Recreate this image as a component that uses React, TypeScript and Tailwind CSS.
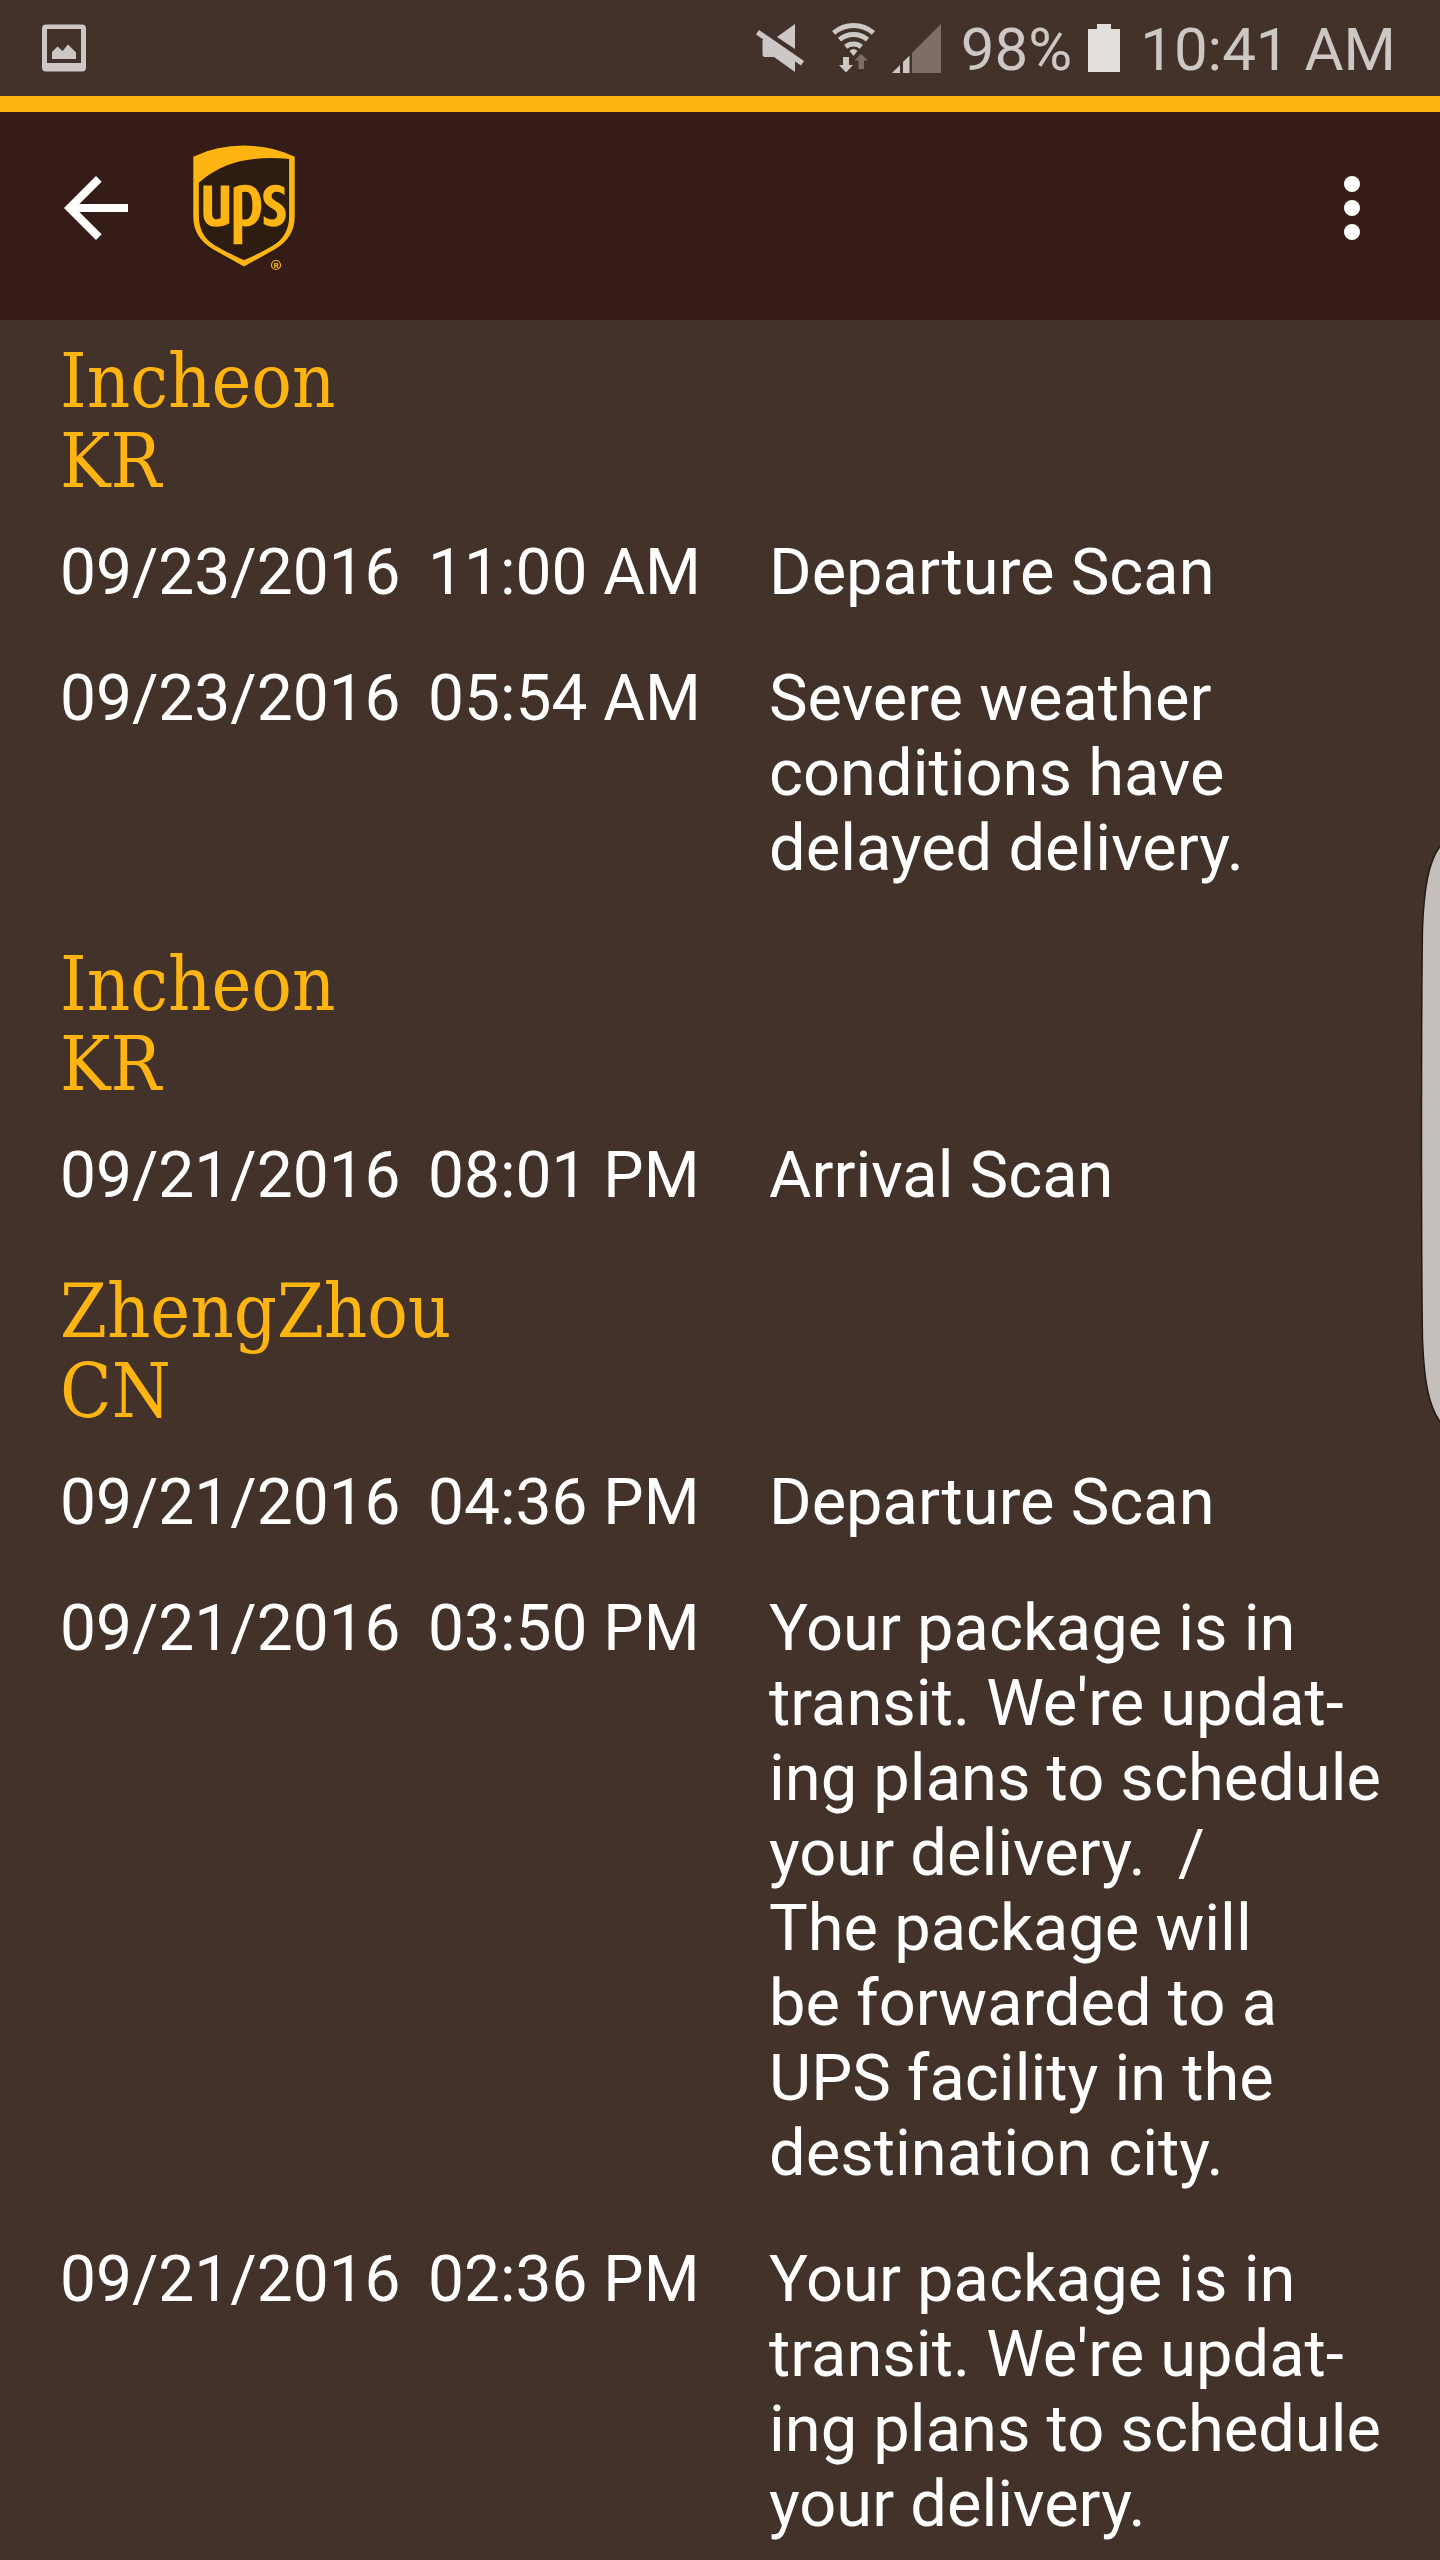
import React from 'react'
import { SiUps } from 'react-icons/si';

interface IScan {
  date: string;
  time: string;
  activity: string;
}
interface IStop {
  city: string;
  country: string;
  scans: IScan[];
}

const stops: IStop[] = [
  {
    city: 'Incheon',
    country: 'KR',
    scans: [
      { date: '09/23/2016', time: '11:00 AM', activity: 'Departure Scan' },
      { date: '09/23/2016', time: '05:54 AM', activity: 'Severe weather\nconditions have\ndelayed delivery.' },
    ],
  },
  {
    city: 'Incheon',
    country: 'KR',
    scans: [
      { date: '09/21/2016', time: '08:01 PM', activity: 'Arrival Scan' },
    ],
  },
  {
    city: 'ZhengZhou',
    country: 'CN',
    scans: [
      { date: '09/21/2016', time: '04:36 PM', activity: 'Departure Scan' },
      {
        date: '09/21/2016',
        time: '03:50 PM',
        activity: "Your package is in\ntransit. We're updat-\ning plans to schedule\nyour delivery.  /\nThe package will\nbe forwarded to a\nUPS facility in the\ndestination city.",
      },
      {
        date: '09/21/2016',
        time: '02:36 PM',
        activity: "Your package is in\ntransit. We're updat-\ning plans to schedule\nyour delivery.",
      },
    ],
  },
];

const IconPicture = () => (
  <svg width="44" height="48" viewBox="0 0 44 48" fill="#cdc8c5">
    <path fillRule="evenodd" d="M4 0.500h36a4 4 0 0 1 4 4v39a4 4 0 0 1-4 4H4a4 4 0 0 1-4-4v-39a4 4 0 0 1 4-4zM5 5v34h34V5z" />
    <path d="M10 35v-7l5.500-5.500 5 4.500 5.500-6.500 8 8V35z" />
  </svg>
)

const IconMute = () => (
  <svg width="48" height="48" viewBox="759 25 48 48" fill="#cdc8c5">
    <path d="M798 25v25l-18-12z" />
    <path d="M765.500 41v14.500q0 2.500 2.500 2.500h9l21 15V62l-31-22z" />
    <path d="M762 31l45 31-3 4.500-45-31z" />
  </svg>
)

const IconWifi = () => (
  <svg width="44" height="50" viewBox="835 24 44 50" fill="none" stroke="#cdc8c5" strokeWidth="5">
    <path d="M836.600 33.900a30.500 30.500 0 0 1 39.800 0" />
    <path d="M842.500 40.700a21.500 21.500 0 0 1 28 0" />
    <path d="M848.600 47.800a12.500 12.500 0 0 1 15.800 0" />
    <path d="M856.500 57l-4-5q4-4 8 0z" fill="#cdc8c5" stroke="none" />
    <path d="M846 58h6v8h4l-7 7.500-7-7.500h4z" fill="#cdc8c5" stroke="none" />
    <path d="M861.500 70v-8.500h-4l6.500-6.500 7 6.500h-4V70z" fill="#7d6f68" stroke="none" />
  </svg>
)

const IconSignal = () => (
  <svg width="49" height="49" viewBox="894 24 49 49">
    <path d="M894 73l8-8v8zM905 73V62l6.500-6.500V73z" fill="#cdc8c5" />
    <path d="M914 73V53l29-29v49z" fill="#7d6f68" />
  </svg>
)

const IconBattery = () => (
  <svg width="32" height="48" viewBox="0 0 32 48" fill="#e3dedb">
    <path d="M9 0h14v5h9v43H0V5h9z" />
  </svg>
)

const IconBack = () => (
  <svg className="size-24" viewBox="0 0 24 24" fill="#fff">
    <path d="M20 11H7.830l5.590-5.590L12 4l-8 8 8 8 1.410-1.410L7.830 13H20v-2z" />
  </svg>
)

const IconMore = () => (
  <svg className="size-24" viewBox="0 0 24 24" fill="#fff">
    <circle cx="12" cy="6" r="2" />
    <circle cx="12" cy="12" r="2" />
    <circle cx="12" cy="18" r="2" />
  </svg>
)

const SHIELD = 'M15.300 14Q37 3.600 64 3.600T112.700 14V73C112.700 88 105 97 94 103.500L64 120.300L34 103.500C23 97 15.300 88 15.300 73Z'

const Logo = () => (
  <svg className="size-32" viewBox="0 0 128 128" role="img" aria-label="UPS">
    <path d={SHIELD} fill="#ffb511" />
    <SiUps x="3" y="1" size={122} color="#2d1c10" />
    <path d={SHIELD} fill="none" stroke="#ffb511" strokeWidth="4" />
    <circle cx="96" cy="121" r="4.500" fill="none" stroke="#ffb511" strokeWidth="1.200" />
    <text x="96" y="124" fontSize="8" fontWeight="700" textAnchor="middle" fill="#ffb511">R</text>
  </svg>
)

const StatusBar = () => (
  <div className="flex h-24 items-center justify-between pl-[42px] pr-11 text-[60px] leading-none text-[#cdc8c5]">
    <IconPicture />
    <div className="flex items-center">
      <IconMute />
      <div className="ml-7"><IconWifi /></div>
      <div className="ml-4"><IconSignal /></div>
      <span className="ml-5 pt-1">98%</span>
      <div className="ml-4"><IconBattery /></div>
      <span className="ml-5 pt-1">10:41 AM</span>
    </div>
  </div>
)

const Header = () => (
  <header className="flex items-center justify-between border-t-16 border-[#ffb511] bg-[#361c16] px-12 pt-8 pb-12">
    <div className="flex items-center gap-9">
      <button type="button" aria-label="Back"><IconBack /></button>
      <Logo />
    </div>
    <button type="button" aria-label="More options" className="-mr-2"><IconMore /></button>
  </header>
)

const Stop: React.FC<{ stop: IStop }> = ({ stop }) => {
  return (
    <section>
      <h2 className="mb-[34px] font-['DejaVu_Serif_Condensed','Liberation_Serif',serif] text-[75px] leading-[80px] text-[#ffb511]">
        {stop.city}<br />{stop.country}
      </h2>
      <table className="w-full table-fixed text-left text-[64px] leading-[75px]">
        <colgroup>
          <col className="w-[368px]" />
          <col className="w-[341px]" />
          <col />
        </colgroup>
        <tbody className="align-top">
          {stop.scans.map((scan, i) => (
            <tr key={i} className="[&+tr>td]:pt-[51px]">
              <td className="whitespace-nowrap">{scan.date}</td>
              <td className="whitespace-nowrap">{scan.time}</td>
              <td className="whitespace-pre-wrap text-[65px] leading-[75px]">{scan.activity}</td>
            </tr>
          ))}
        </tbody>
      </table>
    </section>
  )
}

const App = () => {
  return (
    <div className="relative min-h-screen overflow-hidden bg-[#423229] font-[Roboto,sans-serif] text-white">
      <StatusBar />
      <Header />
      <main className="flex flex-col gap-[58px] pl-[60px] pr-8 pt-[21px] pb-4">
        {stops.map((stop, i) => (
          <Stop key={i} stop={stop} />
        ))}
      </main>
      {/* edge panel handle */}
      <svg className="absolute top-[844px] right-0" width="20" height="580" viewBox="0 0 20 580">
        <path d="M22 0C8 16 4 46 2.500 84Q1.500 150 1.500 290T2.500 496C4 534 8 564 22 580" fill="#c5bfbc" stroke="#221a16" strokeWidth="1.500" />
      </svg>
    </div>
  );
}

export default App
